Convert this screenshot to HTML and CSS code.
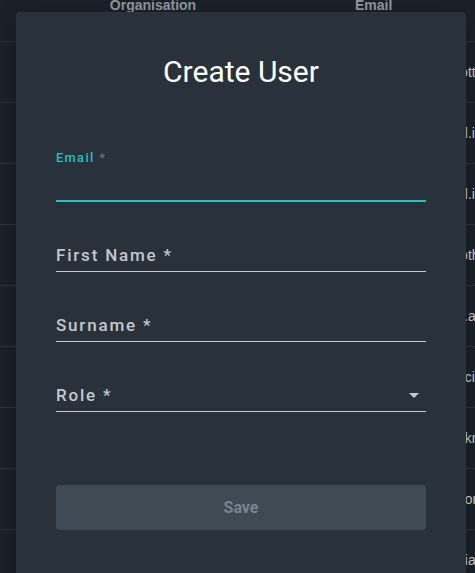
FILE: index.html
```html
<!DOCTYPE html>
<html lang="en">
<head>
<meta charset="utf-8">
<title>Users</title>
<link rel="stylesheet" href="styles.css">
</head>
<body>
  <div class="users-table">
    <div class="row row-head">
      <div class="cell"></div>
      <div class="cell cell-org">Organisation</div>
      <div class="cell cell-email">Email</div>
    </div>
    <div class="row"><div class="cell"></div><div class="cell cell-org">Northwind</div><div class="cell cell-email">lotte.m@northwind.io</div></div>
    <div class="row"><div class="cell"></div><div class="cell cell-org">Northwind</div><div class="cell cell-email">al.i@northwind.io</div></div>
    <div class="row"><div class="cell"></div><div class="cell cell-org">Northwind</div><div class="cell cell-email">el.i@northwind.io</div></div>
    <div class="row"><div class="cell"></div><div class="cell cell-org">Northwind</div><div class="cell cell-email">lothar.b@northwind.io</div></div>
    <div class="row"><div class="cell"></div><div class="cell cell-org">Northwind</div><div class="cell cell-email">it.admin@northwind.io</div></div>
    <div class="row"><div class="cell"></div><div class="cell cell-org">Northwind</div><div class="cell cell-email">acirillo@northwind.io</div></div>
    <div class="row"><div class="cell"></div><div class="cell cell-org">Northwind</div><div class="cell cell-email">ekrause@northwind.io</div></div>
    <div class="row"><div class="cell"></div><div class="cell cell-org">Northwind</div><div class="cell cell-email">norah@northwind.io</div></div>
    <div class="row"><div class="cell"></div><div class="cell cell-org">Northwind</div><div class="cell cell-email">giacomo.r@northwind.io</div></div>
  </div>

  <div class="dialog" role="dialog" aria-labelledby="dialog-title">
    <h2 class="dialog-title" id="dialog-title">Create User</h2>
    <form class="dialog-form">
      <div class="field field-focused">
        <label class="field-label field-label-shrunk">Email <span class="req">*</span></label>
      </div>
      <div class="field">
        <label class="field-label">First Name *</label>
      </div>
      <div class="field">
        <label class="field-label">Surname *</label>
      </div>
      <div class="field field-select">
        <label class="field-label">Role *</label>
        <svg class="select-arrow" viewBox="0 0 24 24" width="24" height="24" aria-hidden="true"><path d="M7 10l5 5 5-5z" fill="currentColor"/></svg>
      </div>
      <button type="button" class="btn-save" disabled>Save</button>
    </form>
  </div>
</body>
</html>
```
FILE: styles.css
```css
* {
  box-sizing: border-box;
}

html, body {
  margin: 0;
  padding: 0;
  height: 100%;
  overflow: hidden;
}

body {
  background: #1b2129;
  font-family: Roboto, "Liberation Sans", sans-serif;
  position: relative;
}

/* background table */
.users-table {
  display: flex;
  flex-direction: column;
  width: 560px;
  font-family: "Liberation Sans", Arial, sans-serif;
}

.row {
  display: grid;
  grid-template-columns: 56px 194px 1fr;
  height: 61px;
  border-bottom: 1px solid #2c333b;
  align-items: center;
  color: #c9cdd2;
  font-size: 14px;
}

.row-head {
  height: 42px;
  align-items: start;
  color: #90979e;
  font-weight: 700;
}

.row-head .cell {
  margin-top: -3px;
  line-height: 16px;
}

.cell {
  white-space: nowrap;
  overflow: hidden;
}

.cell-org {
  text-align: center;
}

.row-head .cell-email {
  padding-left: 105px;
}

.cell-email {
  padding-left: 207px;
}

/* dialog */
.dialog {
  position: absolute;
  left: 16px;
  top: 12px;
  width: 450px;
  height: 620px;
  background: #29323b;
  border-radius: 4px;
  padding: 42px 40px 0;
  box-shadow: 0 8px 24px rgba(0, 0, 0, 0.25);
}

.dialog-title {
  margin: 0;
  font-size: 30px;
  line-height: 36px;
  font-weight: 400;
  color: #ffffff;
  text-align: center;
}

.dialog-form {
  display: flex;
  flex-direction: column;
  gap: 14px;
  margin-top: 56px;
}

.field {
  height: 56px;
  display: flex;
  align-items: flex-end;
  justify-content: space-between;
  border-bottom: 1px solid #c5cad0;
  padding-bottom: 4px;
}

.field-focused {
  border-bottom: 2px solid #24c2c2;
  align-items: flex-start;
  padding-top: 4px;
}

.field-label {
  font-size: 17px;
  line-height: 24px;
  font-weight: 500;
  letter-spacing: 1.8px;
  color: #c3c8ce;
}

.field-label-shrunk {
  font-size: 12.75px;
  line-height: 16px;
  letter-spacing: 1.4px;
  color: #24c2c2;
}

.req {
  color: #6d757d;
}

.field-select {
  align-items: center;
}

.field-select .field-label {
  align-self: flex-end;
}

.select-arrow {
  color: #c5cad0;
  align-self: flex-end;
}

.btn-save {
  margin-top: 59px;
  height: 45px;
  border: 0;
  border-radius: 4px;
  background: #404a54;
  color: #7c848c;
  font-family: Roboto, "Liberation Sans", sans-serif;
  font-size: 16px;
  font-weight: 700;
}
```
